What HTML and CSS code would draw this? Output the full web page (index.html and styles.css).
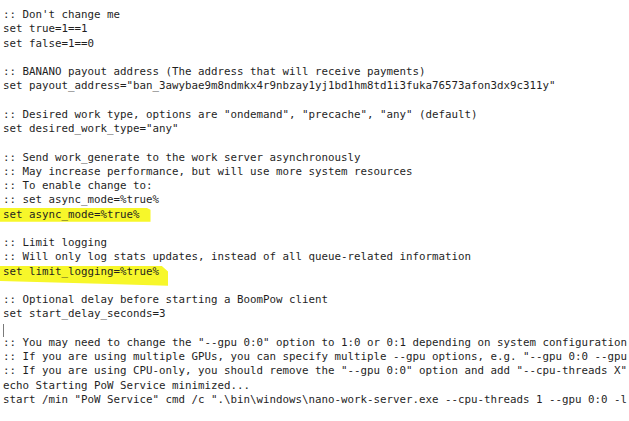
FILE: index.html
```html
<!DOCTYPE html>
<html>
<head>
<meta charset="utf-8">
<link rel="stylesheet" href="styles.css">
</head>
<body>
<div class="editor">
<div class="line">:: Don't change me</div>
<div class="line">set true=1==1</div>
<div class="line">set false=1==0</div>
<div class="line"></div>
<div class="line">:: BANANO payout address (The address that will receive payments)</div>
<div class="line">set payout_address="ban_3awybae9m8ndmkx4r9nbzay1yj1bd1hm8td1i3fuka76573afon3dx9c311y"</div>
<div class="line"></div>
<div class="line">:: Desired work type, options are "ondemand", "precache", "any" (default)</div>
<div class="line">set desired_work_type="any"</div>
<div class="line"></div>
<div class="line">:: Send work_generate to the work server asynchronously</div>
<div class="line">:: May increase performance, but will use more system resources</div>
<div class="line">:: To enable change to:</div>
<div class="line">:: set async_mode=%true%</div>
<div class="line"><span class="mark mark-a">set async_mode=%true%</span></div>
<div class="line"></div>
<div class="line">:: Limit logging</div>
<div class="line">:: Will only log stats updates, instead of all queue-related information</div>
<div class="line"><span class="mark mark-b">set limit_logging=%true%</span></div>
<div class="line"></div>
<div class="line">:: Optional delay before starting a BoomPow client</div>
<div class="line">set start_delay_seconds=3</div>
<div class="line"><span class="caret"></span></div>
<div class="line">:: You may need to change the "--gpu 0:0" option to 1:0 or 0:1 depending on system configuration</div>
<div class="line">:: If you are using multiple GPUs, you can specify multiple --gpu options, e.g. "--gpu 0:0 --gpu</div>
<div class="line">:: If you are using CPU-only, you should remove the "--gpu 0:0" option and add "--cpu-threads X"</div>
<div class="line">echo Starting PoW Service minimized...</div>
<div class="line">start /min "PoW Service" cmd /c ".\bin\windows\nano-work-server.exe --cpu-threads 1 --gpu 0:0 -l</div>
</div>
</body>
</html>
```
FILE: styles.css
```css
html, body {
  margin: 0;
  padding: 0;
  background: #ffffff;
  overflow: hidden;
}

.editor {
  width: 629px;
  height: 421px;
  overflow: hidden;
  padding: 8px 0 0 3px;
  box-sizing: border-box;
  font-family: "DejaVu Sans Mono", monospace;
  font-size: 10.8px;
  line-height: 14.26px;
  color: #1f1f1f;
}

.line {
  height: 14.26px;
  white-space: pre;
  position: relative;
}

.mark {
  position: relative;
  display: inline-block;
  isolation: isolate;
}

.mark::before {
  content: "";
  position: absolute;
  z-index: -1;
  background: #f7f72a;
}

.mark-a::before {
  left: -3px;
  right: -11px;
  top: 0;
  bottom: 0;
  clip-path: polygon(0 3%, 97% 0, 100% 15%, 100% 100%, 0 100%);
}

.mark-b::before {
  left: -3px;
  right: -9px;
  top: 1px;
  bottom: -7px;
  clip-path: polygon(0 0, 96% 0, 100% 30%, 100% 100%, 60% 90%, 0 76%);
}

.caret {
  display: inline-block;
  width: 1px;
  height: 13px;
  margin-top: 2px;
  background: #7a7a7a;
  vertical-align: top;
}
```
